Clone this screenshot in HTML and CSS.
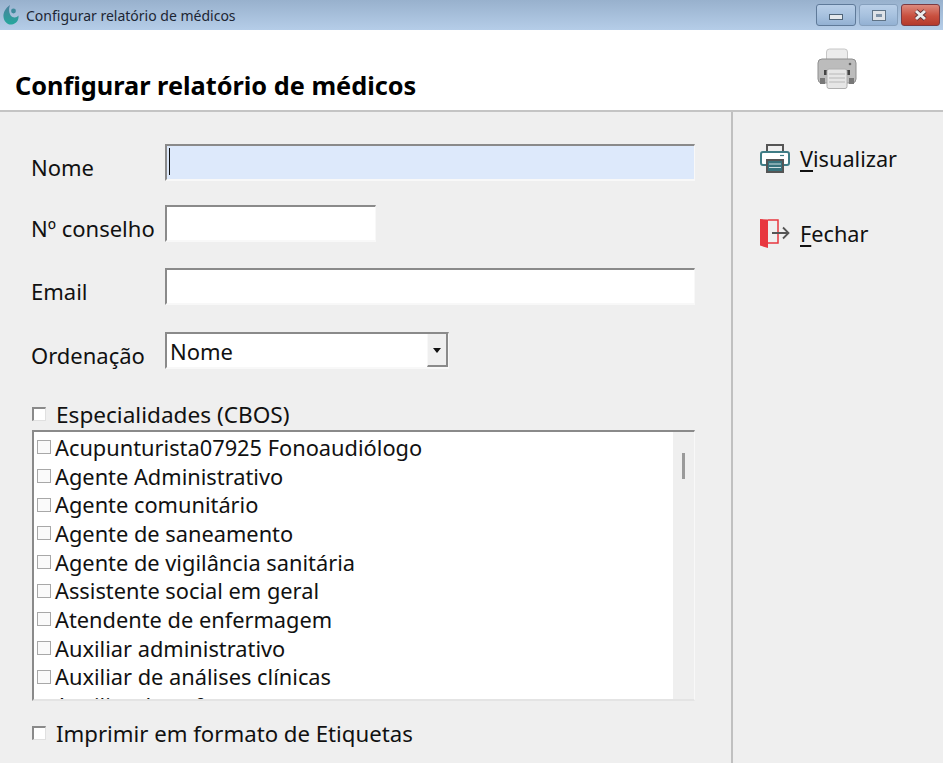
FILE: index.html
```html
<!DOCTYPE html>
<html lang="pt-BR">
<head>
  <meta charset="UTF-8" />
  <title>Configurar relatório de médicos</title>
  <link rel="stylesheet" href="styles.css">
</head>
<body>

  <div class="titlebar">
    <svg class="app-icon" width="16" height="20" viewBox="0 0 16 20">
      <defs>
        <linearGradient id="appGrad" x1="0" y1="0" x2="0" y2="1">
          <stop offset="0" stop-color="#4c7f9c"/>
          <stop offset="1" stop-color="#25a89d"/>
        </linearGradient>
      </defs>
      <path d="M7 0C2.500 3 0 7.500 .5 12c.5 4.500 4 8 8 7.500 4.500-.5 7.500-4 7-9-1.500 2-4 2.500-6 1.500C6.500 10.500 5 5 7 0z" fill="url(#appGrad)"/>
      <circle cx="10.500" cy="6" r="2.400" fill="#3f8a9c"/>
    </svg>
    <span class="window-title">Configurar relatório de médicos</span>
    <div class="window-buttons">
      <div class="win-btn min-btn"><span class="min-glyph"></span></div>
      <div class="win-btn"><span class="max-glyph"></span></div>
      <div class="win-btn close-btn">
        <svg width="15" height="12" viewBox="0 0 15 12">
          <path d="M3 2l9 8M12 2l-9 8" stroke="#5a3035" stroke-width="4.500"/>
          <path d="M3 2l9 8M12 2l-9 8" stroke="#ececec" stroke-width="3"/>
        </svg>
      </div>
    </div>
  </div>

  <header class="page-header">
    <h1>Configurar relatório de médicos</h1>
    <svg class="header-printer" width="40" height="42" viewBox="0 0 40 42">
      <rect x="9.500" y="1" width="21" height="16" rx="3" fill="#ececec" stroke="#c6c6c6"/>
      <rect x="1" y="11" width="38" height="24" rx="4" fill="#bcbcbc" stroke="#8e8e8e"/>
      <circle cx="33" cy="16" r="1.300" fill="#666"/>
      <rect x="3" y="30" width="5" height="6" fill="#777"/>
      <rect x="32" y="30" width="5" height="6" fill="#777"/>
      <rect x="7" y="22" width="3" height="5" fill="#444"/>
      <rect x="30" y="22" width="3" height="5" fill="#444"/>
      <rect x="10" y="21" width="20" height="19.500" rx="2" fill="#e6e6e6" stroke="#b0b0b0"/>
      <path d="M12 26h16M12 30h16M12 34h16" stroke="#c8c8c8" stroke-width="1.500"/>
    </svg>
  </header>

  <div class="content">
    <main class="form-panel">
      <div class="field-row">
        <label>Nome</label>
        <div class="input focused full"><span class="caret"></span></div>
      </div>
      <div class="field-row">
        <label>Nº conselho</label>
        <div class="input short"></div>
      </div>
      <div class="field-row">
        <label>Email</label>
        <div class="input full"></div>
      </div>
      <div class="field-row">
        <label>Ordenação</label>
        <div class="input select">
          <span class="select-value">Nome</span>
          <span class="select-arrow"></span>
        </div>
      </div>

      <div class="check-line specialties">
        <span class="check"></span>
        <span>Especialidades (CBOS)</span>
      </div>

      <div class="list-box">
        <div class="list-items">
          <div class="list-item"><span class="item-check"></span>Acupunturista07925 Fonoaudiólogo</div>
          <div class="list-item"><span class="item-check"></span>Agente Administrativo</div>
          <div class="list-item"><span class="item-check"></span>Agente comunitário</div>
          <div class="list-item"><span class="item-check"></span>Agente de saneamento</div>
          <div class="list-item"><span class="item-check"></span>Agente de vigilância sanitária</div>
          <div class="list-item"><span class="item-check"></span>Assistente social em geral</div>
          <div class="list-item"><span class="item-check"></span>Atendente de enfermagem</div>
          <div class="list-item"><span class="item-check"></span>Auxiliar administrativo</div>
          <div class="list-item"><span class="item-check"></span>Auxiliar de análises clínicas</div>
          <div class="list-item"><span class="item-check"></span>Auxiliar de enfermagem</div>
        </div>
        <div class="scrollbar"><span class="scroll-thumb"></span></div>
      </div>

      <div class="check-line labels">
        <span class="check"></span>
        <span>Imprimir em formato de Etiquetas</span>
      </div>
    </main>

    <aside class="actions">
      <div class="action">
        <svg width="30" height="30" viewBox="0 0 30 30">
          <path d="M7 9V2h16v7" fill="none" stroke="#555" stroke-width="2"/>
          <path d="M6 22H3a2 2 0 0 1-2-2V11a2 2 0 0 1 2-2h24a2 2 0 0 1 2 2v9a2 2 0 0 1-2 2h-3" fill="#fff" stroke="#3f7c85" stroke-width="2"/>
          <rect x="7" y="17" width="16" height="12" fill="#37727c" stroke="#555" stroke-width="2"/>
          <path d="M9 21h12M9 24.500h12" stroke="#cfe0e2" stroke-width="1"/>
          <path d="M20 12.500h4" stroke="#3f7c85" stroke-width="1.200"/>
        </svg>
        <span class="action-label"><u>V</u>isualizar</span>
      </div>
      <div class="action">
        <svg width="30" height="30" viewBox="0 0 30 30">
          <path d="M8 2h10v23H8" fill="none" stroke="#e8373f" stroke-width="1.500"/>
          <path d="M0 1l8 .5V30l-8-2.500z" fill="#e8373f"/>
          <path d="M12 15h16M23 9.500l5.500 5.500-5.500 5.500" fill="none" stroke="#555" stroke-width="1.800"/>
        </svg>
        <span class="action-label"><u>F</u>echar</span>
      </div>
    </aside>
  </div>

</body>
</html>
```

FILE: styles.css
```css
html, body {
  height: 100%;
}

body {
  margin: 0;
  background-color: #efefef;
  font-family: 'Noto Sans', sans-serif;
  color: #111;
  overflow: hidden;
  display: flex;
  flex-direction: column;
}

/* barra de titulo */
.titlebar {
  height: 30px;
  flex-shrink: 0;
  background: linear-gradient(to bottom, #98b1cd, #b5cde8);
  display: flex;
  align-items: center;
  padding-left: 3px;
}

.app-icon {
  margin-right: 7px;
}

.window-title {
  font-size: 14px;
  color: #1c2533;
}

.window-buttons {
  margin-left: auto;
  margin-right: 3px;
  display: flex;
  align-items: flex-start;
  gap: 3px;
  align-self: flex-start;
  padding-top: 4px;
}

.win-btn {
  width: 39px;
  height: 22px;
  box-sizing: border-box;
  border: 1px solid #86a0bd;
  border-radius: 3px;
  background: linear-gradient(to bottom, #b9cfe8, #a8c2df 50%, #93b1d3);
  display: flex;
  align-items: center;
  justify-content: center;
}

.min-btn {
  width: 40px;
  border-color: #5f7a99;
}

.close-btn {
  border-color: #7b3a42;
  background: linear-gradient(to bottom, #dc8a7e, #c9503f 55%, #b4392c);
}

.min-glyph {
  width: 14px;
  height: 6px;
  margin-top: 3px;
  background: #e4e8ec;
  border: 1px solid #4f6478;
  box-sizing: border-box;
}

.max-glyph {
  width: 12px;
  height: 9px;
  box-sizing: border-box;
  border: 3px solid #dfe3e8;
  outline: 1px solid #5f7386;
  background: #7f93a8;
}

/* cabecalho branco */
.page-header {
  height: 82px;
  box-sizing: border-box;
  flex-shrink: 0;
  background-color: white;
  border-bottom: 2px solid #c4c4c4;
  display: flex;
  align-items: flex-end;
  justify-content: space-between;
  padding: 0 86px 8px 15px;
}

h1 {
  margin: 0;
  font-size: 25.300px;
  font-weight: bold;
  color: #000;
}

.header-printer {
  margin-bottom: 12px;
}

.content {
  flex-grow: 1;
  display: flex;
  min-height: 0;
}

.form-panel {
  width: 733px;
  box-sizing: border-box;
  padding: 32px 36px 0 32px;
  border-right: 2px solid #c0c0c0;
  flex-shrink: 0;
}

.field-row {
  display: flex;
  height: 37px;
  margin-bottom: 26px;
}

.field-row:first-child {
  margin-bottom: 24px;
}

.field-row:nth-child(3) {
  margin-bottom: 27px;
}

.field-row label {
  width: 133px;
  flex-shrink: 0;
  font-size: 22px;
  line-height: 46px;
  white-space: nowrap;
  margin-left: -1px;
  padding-right: 1px;
}

/* campos */
.input {
  height: 37px;
  box-sizing: border-box;
  background-color: white;
  border-top: 2px solid #8a8a8a;
  border-left: 2px solid #8a8a8a;
  border-right: 1px solid #f8f8f8;
  border-bottom: 2px solid #f8f8f8;
}

.full {
  width: 530px;
}

.short {
  width: 211px;
}

.focused {
  background-color: #dde9fb;
  padding: 2px 0 0 2px;
}

.caret {
  display: block;
  width: 1px;
  height: 27px;
  background-color: #111;
}

.select {
  width: 284px;
  display: flex;
  justify-content: space-between;
}

.select-value {
  font-size: 22px;
  line-height: 35px;
  padding-left: 3px;
  height: 33px;
}

.select-arrow {
  width: 21px;
  box-sizing: border-box;
  background-color: #efefef;
  border-left: 1px solid #f8f8f8;
  border-right: 2px solid #8a8a8a;
  border-bottom: 2px solid #8a8a8a;
  position: relative;
}

.select-arrow::after {
  content: '';
  position: absolute;
  left: 5px;
  top: 14px;
  border-top: 5px solid #111;
  border-left: 4px solid transparent;
  border-right: 4px solid transparent;
}

/* checkboxes */
.check-line {
  display: flex;
  align-items: center;
  gap: 10px;
  font-size: 22.200px;
  line-height: 30px;
}

.check-line span:last-child {
  padding-top: 3px;
}

.specialties {
  margin-top: 28px;
  font-size: 22.600px;
}

.labels {
  margin-top: 15px;
}

.check {
  width: 14px;
  height: 14px;
  box-sizing: border-box;
  flex-shrink: 0;
  background-color: white;
  border-top: 2px solid #8a8a8a;
  border-left: 2px solid #8a8a8a;
  border-right: 1px solid #e0e0e0;
  border-bottom: 1px solid #e0e0e0;
}

/* lista */
.list-box {
  width: 663px;
  height: 271px;
  margin-top: 0;
  box-sizing: border-box;
  background-color: white;
  border-top: 2px solid #8a8a8a;
  border-left: 2px solid #8a8a8a;
  border-right: 1px solid #f8f8f8;
  border-bottom: 2px solid #e4e4e4;
  display: flex;
  overflow: hidden;
}

.list-items {
  flex-grow: 1;
  overflow: hidden;
  padding-top: 1px;
}

.list-item {
  height: 28.700px;
  display: flex;
  align-items: center;
  font-size: 21.800px;
  white-space: nowrap;
}

.item-check {
  width: 14px;
  height: 14px;
  box-sizing: border-box;
  margin: 0 4px 0 3px;
  flex-shrink: 0;
  border: 1px solid #a8a8a8;
  background-color: #fafafa;
}

.scrollbar {
  width: 21px;
  flex-shrink: 0;
  background-color: #efefef;
  position: relative;
}

.scroll-thumb {
  position: absolute;
  left: 9px;
  top: 21px;
  width: 3px;
  height: 26px;
  background-color: #9a9a9a;
}

/* botoes da direita */
.actions {
  flex-grow: 1;
  padding: 31px 0 0 27px;
  display: flex;
  flex-direction: column;
  gap: 45px;
}

.action {
  display: flex;
  align-items: center;
  gap: 10px;
  height: 30px;
  font-size: 21.700px;
}

.action-label u {
  text-underline-offset: 3px;
}
```
